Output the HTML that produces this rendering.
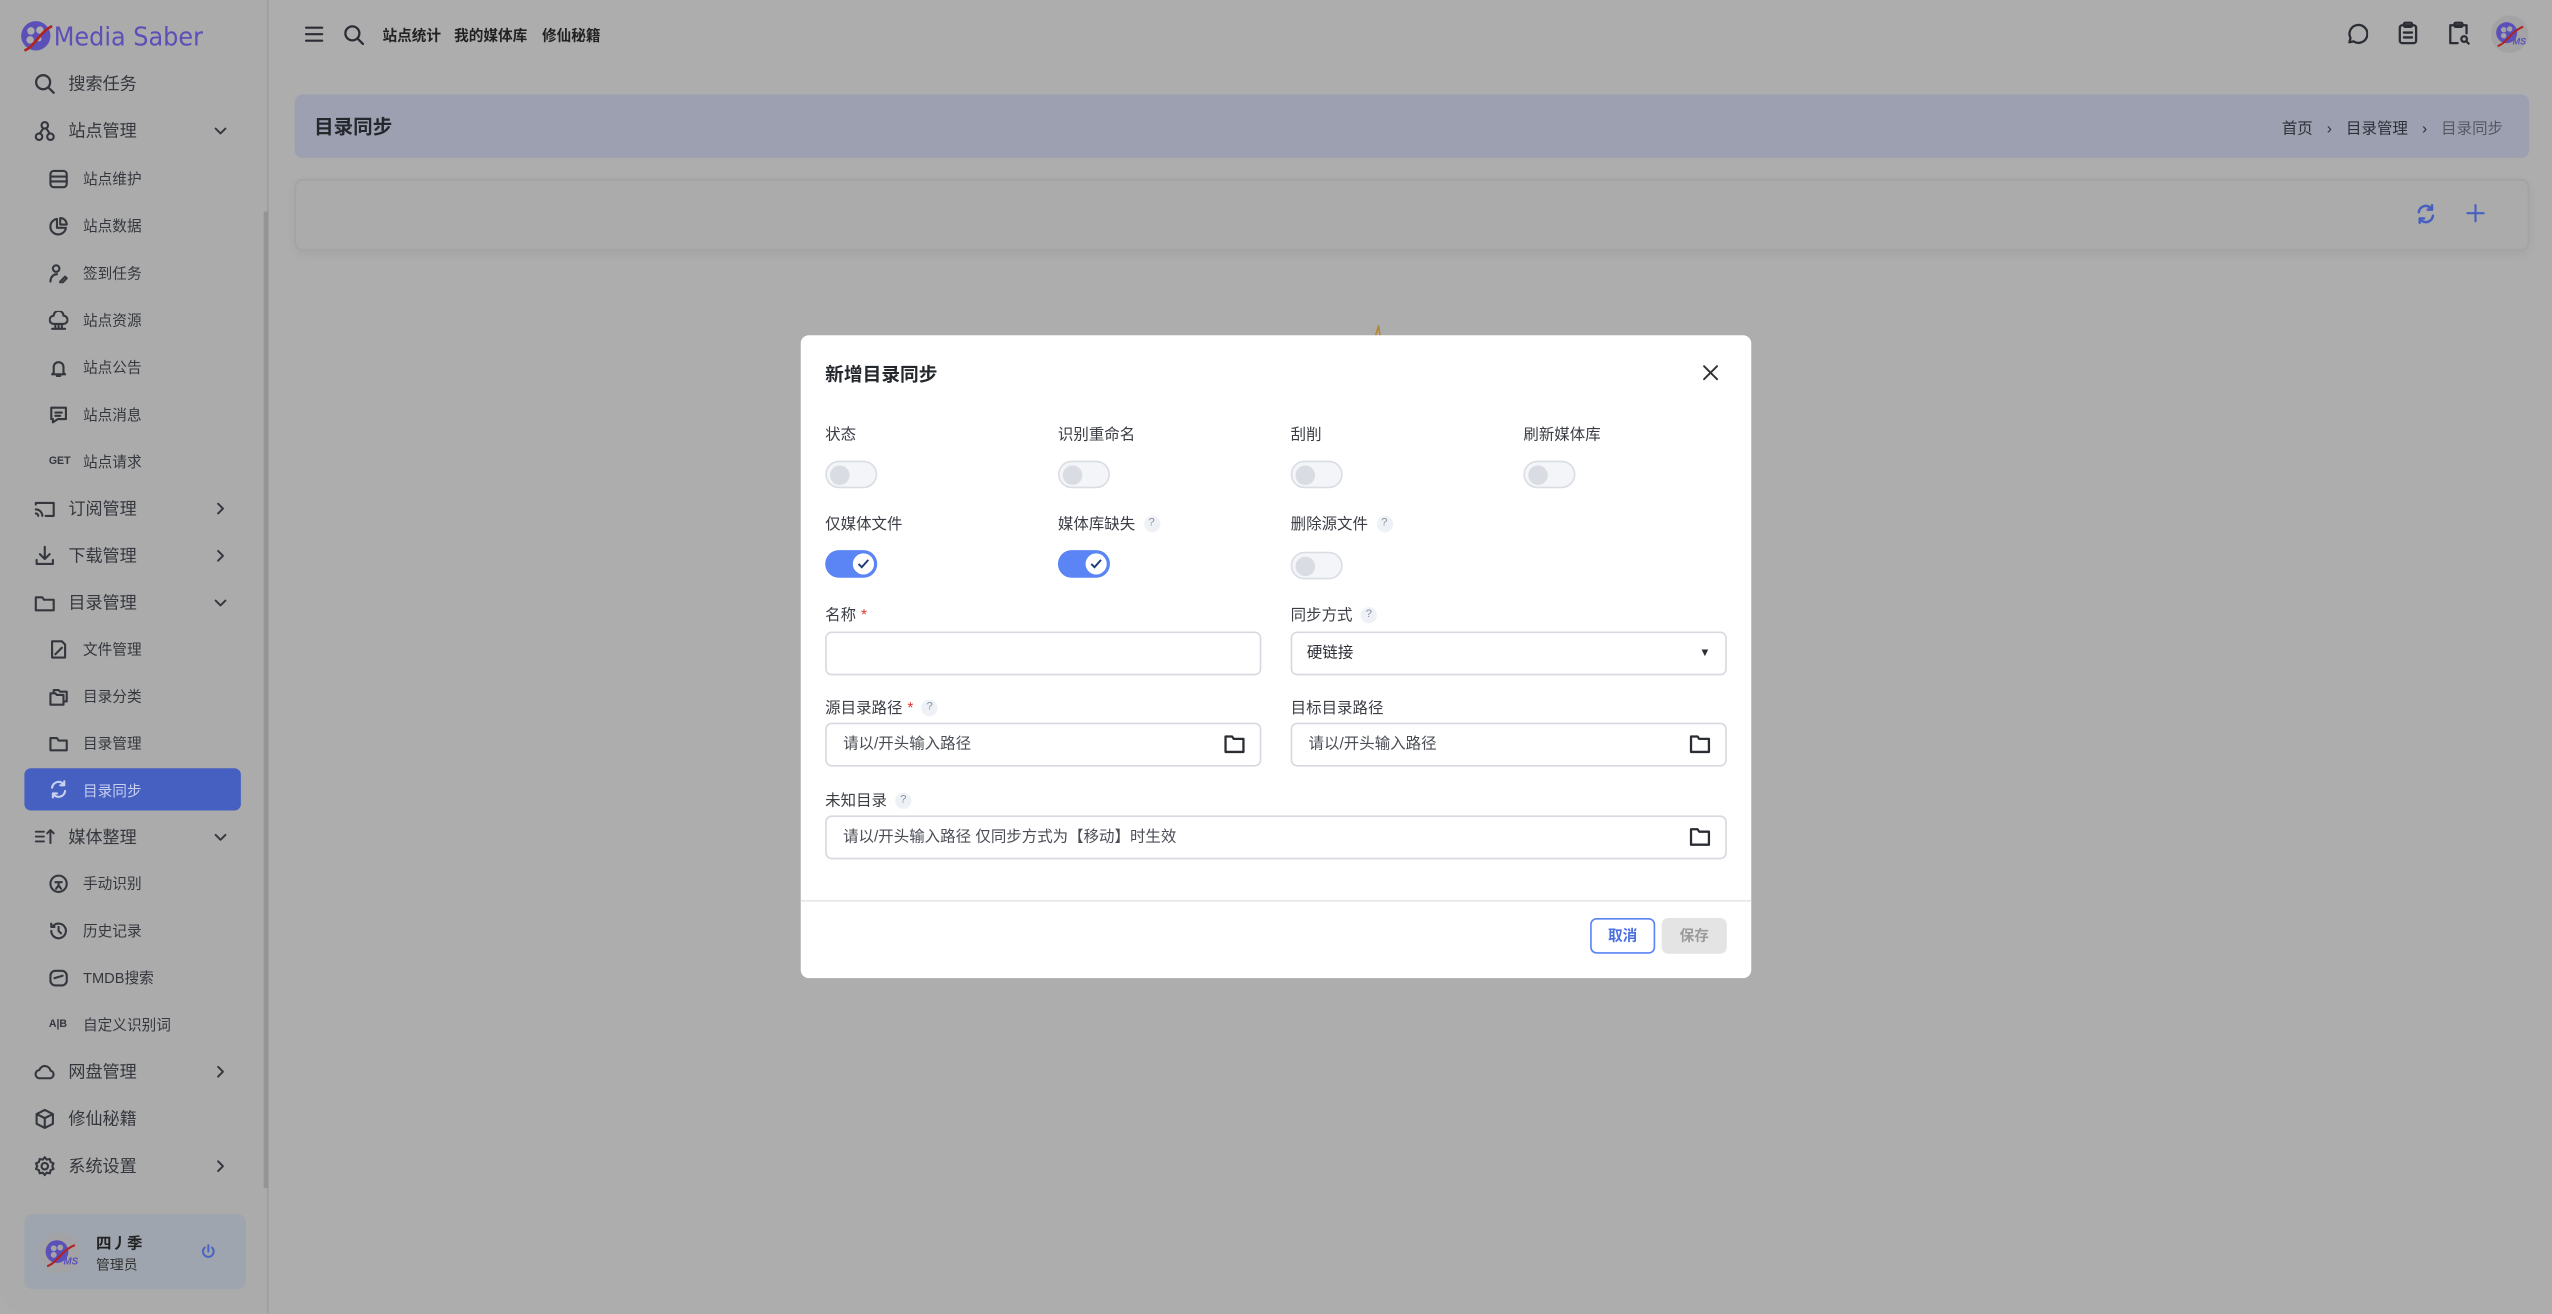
<!DOCTYPE html>
<html><head><meta charset="utf-8">
<style>
*{box-sizing:border-box;margin:0;padding:0}
html,body{width:2552px;height:1314px;overflow:hidden;background:#adadad}
body{font-family:"Liberation Sans","Noto Sans CJK SC",sans-serif;color:#2a2d33}
#w{position:absolute;left:0;top:0;width:1568px;height:807px;transform:scale(1.62755);transform-origin:0 0;background:#adadad}
.abs{position:absolute}
.side{left:0;top:0;width:165px;height:807px;background:#ababab;border-right:1px solid #9c9c9c;border-radius:0 0 0 14px}
.it{position:absolute;font-size:10.5px;color:#34373d;display:flex;align-items:center}
.sub{font-size:9px}
svg.i{fill:none;stroke-linecap:round;stroke-linejoin:round}
.dlg{left:492px;top:206px;width:584px;height:395px;background:#fff;border-radius:5px}
.lbl{position:absolute;font-size:9.5px;color:#3a3d44}
.q{display:inline-block;width:10px;height:10px;border-radius:5px;background:#eef1f5;color:#8a93a0;font-size:7px;text-align:center;line-height:10px;margin-left:5px;vertical-align:middle}
.tg{position:absolute;width:32px;height:17px;border-radius:9px;background:#f3f5f8;border:1.3px solid #dadde3}
.tg::after{content:"";position:absolute;left:2px;top:1.5px;width:12px;height:12px;border-radius:6px;background:#d9dce2}
.on{position:absolute;width:32px;height:17px;border-radius:9px;background:#5b84f4}
.on span{position:absolute;right:2px;top:2px;width:13px;height:13px;border-radius:7px;background:#fff}
.inp{position:absolute;height:27px;border:1px solid #d6d9df;border-radius:4px;font-size:9.5px;color:#4a4d55;padding-left:10px;line-height:25px}
.inp svg{position:absolute;right:9px;top:6px;fill:none;stroke:#2a2d33;stroke-width:1.4;stroke-linejoin:round}
.req{color:#e53935;margin-left:3px}
</style></head><body><div id="w">

<div class="abs side">
  <svg class="abs" style="left:12px;top:12px" width="22" height="22" viewBox="0 0 22 22"><circle cx="10" cy="10" r="9" fill="#5b4fb8"/><circle cx="7" cy="7" r="2.3" fill="#ababab"/><circle cx="12.5" cy="6.5" r="2.3" fill="#ababab"/><circle cx="6.5" cy="12.5" r="2.3" fill="#ababab"/><circle cx="12" cy="12" r="1.5" fill="#ababab"/><path d="M3 19 C9 17 12 8 20 4" stroke="#b12323" stroke-width="1.6" fill="none"/></svg>
  <div class="abs" style="left:33px;top:13px;font-size:16px;color:#5b4fb8;font-family:'DejaVu Sans',sans-serif;transform:scaleX(0.92);transform-origin:0 0">Media Saber</div>

  <div class="it" style="left:42px;top:44px">搜索任务</div>
  <svg class="abs i" style="left:21px;top:45px" width="13" height="13" viewBox="0 0 13 13" stroke="#34373d" stroke-width="1.4"><circle cx="5.5" cy="5.5" r="4.3"/><path d="M9 9l3 3"/></svg>

  <div class="it" style="left:42px;top:73px">站点管理</div>
  <svg class="abs i" style="left:131px;top:77px" width="9" height="7" viewBox="0 0 9 7" stroke="#34373d" stroke-width="1.2"><path d="M1.5 2l3 3 3-3"/></svg>
  <svg class="abs i" style="left:21px;top:74px" width="13" height="13" viewBox="0 0 13 13" stroke="#34373d" stroke-width="1.3"><circle cx="6.5" cy="3" r="2"/><circle cx="3" cy="10" r="2"/><circle cx="10" cy="10" r="2"/><path d="M5.5 5L3.5 8M7.5 5l2 3"/></svg>

  <div class="it sub" style="left:51px;top:103px">站点维护</div>
  <svg class="abs i" style="left:30px;top:104px" width="12" height="12" viewBox="0 0 12 12" stroke="#34373d" stroke-width="1.3"><rect x="1" y="1" width="10" height="10" rx="2"/><path d="M1 4.5h10M1 7.5h10"/></svg>
  <div class="it sub" style="left:51px;top:132px">站点数据</div>
  <svg class="abs i" style="left:30px;top:133px" width="12" height="12" viewBox="0 0 12 12" stroke="#34373d" stroke-width="1.3"><path d="M5 1.5a4.8 4.8 0 1 0 5.5 5.5H5z"/><path d="M7 1v4h4A4 4 0 0 0 7 1z"/></svg>
  <div class="it sub" style="left:51px;top:161px">签到任务</div>
  <svg class="abs i" style="left:30px;top:162px" width="12" height="12" viewBox="0 0 12 12" stroke="#34373d" stroke-width="1.3"><circle cx="4.5" cy="3" r="2"/><path d="M1 11c0-3 2-4.5 4-4.5M7 11l3-3 1 1-3 3H7z"/></svg>
  <div class="it sub" style="left:51px;top:190px">站点资源</div>
  <svg class="abs i" style="left:30px;top:191px" width="12" height="12" viewBox="0 0 12 12" stroke="#34373d" stroke-width="1.3"><path d="M3 8a2.5 2.5 0 0 1 0-5 3 3 0 0 1 6 0 2.5 2.5 0 0 1 0 5zM4 8v3M6 8v3M8 8v3M2 11h8"/></svg>
  <div class="it sub" style="left:51px;top:219px">站点公告</div>
  <svg class="abs i" style="left:30px;top:220px" width="12" height="12" viewBox="0 0 12 12" stroke="#34373d" stroke-width="1.3"><path d="M3 9V5.5a3 3 0 0 1 6 0V9l1 1H2zM5 11h2"/></svg>
  <div class="it sub" style="left:51px;top:248px">站点消息</div>
  <svg class="abs i" style="left:30px;top:249px" width="12" height="12" viewBox="0 0 12 12" stroke="#34373d" stroke-width="1.3"><path d="M1.5 1.5h9v7h-5l-3 2v-2h-1z"/><path d="M4 4.5h4M4 6.5h3"/></svg>
  <div class="it sub" style="left:51px;top:277px">站点请求</div>
  <div class="abs" style="left:30px;top:280px;font-size:6.5px;font-weight:bold;color:#34373d">GET</div>

  <div class="it" style="left:42px;top:305px">订阅管理</div>
  <svg class="abs i" style="left:132px;top:308px" width="7" height="9" viewBox="0 0 7 9" stroke="#34373d" stroke-width="1.2"><path d="M2 1.5l3 3-3 3"/></svg>
  <svg class="abs i" style="left:21px;top:306px" width="13" height="13" viewBox="0 0 13 13" stroke="#34373d" stroke-width="1.3"><path d="M1 4V3h11v8H7M1 7a4 4 0 0 1 4 4M1 9.5a1.5 1.5 0 0 1 1.5 1.5"/></svg>
  <div class="it" style="left:42px;top:334px">下载管理</div>
  <svg class="abs i" style="left:132px;top:337px" width="7" height="9" viewBox="0 0 7 9" stroke="#34373d" stroke-width="1.2"><path d="M2 1.5l3 3-3 3"/></svg>
  <svg class="abs i" style="left:21px;top:335px" width="13" height="13" viewBox="0 0 13 13" stroke="#34373d" stroke-width="1.3"><path d="M6.5 1v7M3.5 5.5l3 3 3-3M1.5 9v2.5h10V9"/></svg>
  <div class="it" style="left:42px;top:363px">目录管理</div>
  <svg class="abs i" style="left:131px;top:367px" width="9" height="7" viewBox="0 0 9 7" stroke="#34373d" stroke-width="1.2"><path d="M1.5 2l3 3 3-3"/></svg>
  <svg class="abs i" style="left:21px;top:364px" width="13" height="13" viewBox="0 0 13 13" stroke="#34373d" stroke-width="1.3"><path d="M1 3h4l1 1.5h6V11H1z"/></svg>

  <div class="it sub" style="left:51px;top:392px">文件管理</div>
  <svg class="abs i" style="left:30px;top:393px" width="12" height="12" viewBox="0 0 12 12" stroke="#34373d" stroke-width="1.3"><path d="M2 1h6l2 2v8H2zM4 9l4-4"/></svg>
  <div class="it sub" style="left:51px;top:421px">目录分类</div>
  <svg class="abs i" style="left:30px;top:422px" width="12" height="12" viewBox="0 0 12 12" stroke="#34373d" stroke-width="1.3"><path d="M1 4h3l1 1h4v6H1zM3 4V2h3l1 1h4v6H9"/></svg>
  <div class="it sub" style="left:51px;top:450px">目录管理</div>
  <svg class="abs i" style="left:30px;top:451px" width="12" height="12" viewBox="0 0 12 12" stroke="#34373d" stroke-width="1.3"><path d="M1 2.5h4l1 1.5h5V10H1z"/></svg>

  <div class="abs" style="left:15px;top:472px;width:133px;height:26px;background:#4560c0;border-radius:4px"></div>
  <div class="it sub" style="left:51px;top:479px;color:#c7d0ee">目录同步</div>
  <svg class="abs i" style="left:30px;top:479px" width="12" height="12" viewBox="0 0 12 12" stroke="#c7d0ee" stroke-width="1.3"><path d="M2 5a4 4 0 0 1 7.5-1.5M10 7a4 4 0 0 1-7.5 1.5M9.5 1v2.5H7M2.5 11V8.5H5"/></svg>

  <div class="it" style="left:42px;top:507px">媒体整理</div>
  <svg class="abs i" style="left:131px;top:511px" width="9" height="7" viewBox="0 0 9 7" stroke="#34373d" stroke-width="1.2"><path d="M1.5 2l3 3 3-3"/></svg>
  <svg class="abs i" style="left:21px;top:508px" width="13" height="12" viewBox="0 0 13 12" stroke="#34373d" stroke-width="1.2"><path d="M1 3h5M1 6h5M1 9h5M10 10V2M8 4l2-2 2 2"/></svg>
  <div class="it sub" style="left:51px;top:536px">手动识别</div>
  <svg class="abs i" style="left:30px;top:537px" width="12" height="12" viewBox="0 0 12 12" stroke="#34373d" stroke-width="1.3"><circle cx="6" cy="6" r="5"/><path d="M4 5h4M6 5v2l-1.5 2M6 7l1.5 2"/></svg>
  <div class="it sub" style="left:51px;top:565px">历史记录</div>
  <svg class="abs i" style="left:30px;top:566px" width="12" height="12" viewBox="0 0 12 12" stroke="#34373d" stroke-width="1.3"><path d="M1.5 6a4.5 4.5 0 1 0 1.3-3.2M1.5 1.5v2h2M6 3.5V6l1.5 1.5"/></svg>
  <div class="it sub" style="left:51px;top:594px">TMDB搜索</div>
  <svg class="abs i" style="left:30px;top:595px" width="12" height="12" viewBox="0 0 12 12" stroke="#34373d" stroke-width="1.3"><rect x="1" y="1.5" width="10" height="9" rx="3"/><path d="M3.5 6l5-1.5"/></svg>
  <div class="it sub" style="left:51px;top:623px">自定义识别词</div>
  <div class="abs" style="left:30px;top:626px;font-size:6.5px;font-weight:bold;color:#34373d">A|B</div>

  <div class="it" style="left:42px;top:651px">网盘管理</div>
  <svg class="abs i" style="left:132px;top:654px" width="7" height="9" viewBox="0 0 7 9" stroke="#34373d" stroke-width="1.2"><path d="M2 1.5l3 3-3 3"/></svg>
  <svg class="abs i" style="left:21px;top:652px" width="13" height="13" viewBox="0 0 13 13" stroke="#34373d" stroke-width="1.3"><path d="M3.5 10.5a2.5 2.5 0 0 1-.3-5 3.5 3.5 0 0 1 6.8.3 2.4 2.4 0 0 1 0 4.7z"/></svg>
  <div class="it" style="left:42px;top:680px">修仙秘籍</div>
  <svg class="abs i" style="left:21px;top:681px" width="13" height="13" viewBox="0 0 13 13" stroke="#34373d" stroke-width="1.3"><path d="M6.5 1l5 2.5v6l-5 2.5-5-2.5v-6zM1.5 3.5l5 2.5 5-2.5M6.5 6v6"/></svg>
  <div class="it" style="left:42px;top:709px">系统设置</div>
  <svg class="abs i" style="left:132px;top:712px" width="7" height="9" viewBox="0 0 7 9" stroke="#34373d" stroke-width="1.2"><path d="M2 1.5l3 3-3 3"/></svg>
  <svg class="abs i" style="left:21px;top:710px" width="13" height="13" viewBox="0 0 13 13" stroke="#34373d" stroke-width="1.3"><circle cx="6.5" cy="6.5" r="2"/><path d="M6.5 1l1.2 1.5 1.9-.4.5 1.9 1.8.8-.8 1.7.8 1.7-1.8.8-.5 1.9-1.9-.4L6.5 12l-1.2-1.5-1.9.4-.5-1.9-1.8-.8.8-1.7-.8-1.7 1.8-.8.5-1.9 1.9.4z"/></svg>

  <div class="abs" style="left:162px;top:130px;width:3px;height:600px;background:#949494"></div>

  <div class="abs" style="left:15px;top:746px;width:136px;height:46px;background:#9ea5ae;border-radius:5px"></div>
  <svg class="abs" style="left:24px;top:757px" width="26" height="26" viewBox="0 0 26 26"><circle cx="13" cy="13" r="12.5" fill="#a3a3a6"/><circle cx="11" cy="12" r="7" fill="#5b4fb8"/><circle cx="9" cy="10" r="1.8" fill="#a3a3a6"/><circle cx="13" cy="9.5" r="1.8" fill="#a3a3a6"/><circle cx="9" cy="14" r="1.8" fill="#a3a3a6"/><path d="M5 21C11 19 14 11 22 8" stroke="#b12323" stroke-width="1.3" fill="none"/><text x="15" y="20" font-size="6" font-style="italic" font-weight="bold" fill="#5b4fb8" font-family="Liberation Sans">MS</text></svg>
  <div class="abs" style="left:59px;top:756px;font-size:9.5px;font-weight:bold;color:#222">四丿季</div>
  <div class="abs" style="left:59px;top:771px;font-size:8.5px;color:#333">管理员</div>
  <svg class="abs i" style="left:123px;top:764px" width="10" height="10" viewBox="0 0 10 10" stroke="#4a63c4" stroke-width="1.2"><path d="M5 1v4M2.8 2.5a3.3 3.3 0 1 0 4.4 0"/></svg>
</div>

<!-- top bar -->
<svg class="abs i" style="left:187px;top:16px" width="12" height="10" viewBox="0 0 12 10" stroke="#2a2d33" stroke-width="1.3"><path d="M1 1h10M1 5h10M1 9h10"/></svg>
<svg class="abs i" style="left:211px;top:15px" width="13" height="13" viewBox="0 0 13 13" stroke="#2a2d33" stroke-width="1.4"><circle cx="5.5" cy="5.5" r="4.3"/><path d="M9 9l3 3"/></svg>
<div class="abs" style="left:235px;top:15px;font-size:9px;font-weight:bold;color:#222">站点统计</div>
<div class="abs" style="left:279px;top:15px;font-size:9px;font-weight:bold;color:#222">我的媒体库</div>
<div class="abs" style="left:333px;top:15px;font-size:9px;font-weight:bold;color:#222">修仙秘籍</div>

<svg class="abs i" style="left:1441px;top:14px" width="14" height="14" viewBox="0 0 14 14" stroke="#2a2d33" stroke-width="1.4"><path d="M2.5 12l.7-2.6A5.5 5.5 0 1 1 5 11.4z"/></svg>
<svg class="abs i" style="left:1473px;top:13px" width="13" height="15" viewBox="0 0 13 15" stroke="#2a2d33" stroke-width="1.4"><rect x="1.5" y="2.5" width="10" height="11" rx="1.5"/><rect x="4" y="1" width="5" height="2.5" rx=".8"/><path d="M4 7h5M4 10h5"/></svg>
<svg class="abs i" style="left:1504px;top:13px" width="14" height="15" viewBox="0 0 14 15" stroke="#2a2d33" stroke-width="1.4"><path d="M6 13.5H1.5v-11h10v5"/><rect x="4" y="1" width="5" height="2.5" rx=".8"/><circle cx="10" cy="11" r="1.7"/><path d="M11.3 12.3l1.5 1.5"/></svg>
<svg class="abs" style="left:1530px;top:9px" width="24" height="24" viewBox="0 0 26 26"><circle cx="13" cy="13" r="12.5" fill="#a3a3a6"/><circle cx="11" cy="12" r="7" fill="#5b4fb8"/><circle cx="9" cy="10" r="1.8" fill="#a3a3a6"/><circle cx="13" cy="9.5" r="1.8" fill="#a3a3a6"/><circle cx="9" cy="14" r="1.8" fill="#a3a3a6"/><path d="M5 21C11 19 14 11 22 8" stroke="#b12323" stroke-width="1.3" fill="none"/><text x="15" y="20" font-size="6" font-style="italic" font-weight="bold" fill="#5b4fb8" font-family="Liberation Sans">MS</text></svg>

<!-- page header -->
<div class="abs" style="left:181px;top:58px;width:1373px;height:39px;background:#9ca0b1;border-radius:5px"></div>
<div class="abs" style="left:193px;top:69px;font-size:12px;font-weight:bold;color:#24272c">目录同步</div>
<div class="abs" style="left:1402px;top:71px;font-size:9.5px;color:#2d3036;white-space:nowrap">首页 <span style="margin:0 6px">›</span> 目录管理 <span style="margin:0 6px">›</span> <span style="color:#555a62">目录同步</span></div>
<div class="abs" style="left:181px;top:110px;width:1373px;height:44px;background:#ababab;border:1px solid #a3a3a3;border-radius:5px;box-shadow:0 2px 6px rgba(0,0,0,.05)"></div>
<svg class="abs i" style="left:1484px;top:125px" width="13" height="13" viewBox="0 0 12 12" stroke="#4560c0" stroke-width="1.4"><path d="M2 5a4 4 0 0 1 7.5-1.5M10 7a4 4 0 0 1-7.5 1.5M9.5 1v2.5H7M2.5 11V8.5H5"/></svg>
<svg class="abs i" style="left:1515px;top:125px" width="12" height="12" viewBox="0 0 12 12" stroke="#4560c0" stroke-width="1.3"><path d="M6 1v10M1 6h10"/></svg>
<svg class="abs" style="left:844px;top:199px" width="6" height="8" viewBox="0 0 6 8"><path d="M1 8L3 1l1 7" stroke="#b7852d" fill="none" stroke-width="1"/></svg>

<!-- dialog -->
<div class="abs dlg">
  <div class="abs" style="left:15px;top:16px;font-size:11.5px;font-weight:bold;color:#24272c">新增目录同步</div>
  <svg class="abs i" style="left:554px;top:18px" width="10" height="10" viewBox="0 0 10 10" stroke="#333" stroke-width="1.2"><path d="M1 1l8 8M9 1l-8 8"/></svg>

  <div class="lbl" style="left:15px;top:53px">状态</div>
  <div class="lbl" style="left:158px;top:53px">识别重命名</div>
  <div class="lbl" style="left:301px;top:53px">刮削</div>
  <div class="lbl" style="left:444px;top:53px">刷新媒体库</div>
  <div class="tg" style="left:15px;top:77px"></div>
  <div class="tg" style="left:158px;top:77px"></div>
  <div class="tg" style="left:301px;top:77px"></div>
  <div class="tg" style="left:444px;top:77px"></div>

  <div class="lbl" style="left:15px;top:108px">仅媒体文件</div>
  <div class="lbl" style="left:158px;top:108px">媒体库缺失<span class="q">?</span></div>
  <div class="lbl" style="left:301px;top:108px">删除源文件<span class="q">?</span></div>
  <div class="on" style="left:15px;top:132px"><span><svg width="13" height="13" viewBox="0 0 13 13"><path d="M3.5 6.5l2 2 4-4.5" stroke="#1f3c7a" stroke-width="1.2" fill="none"/></svg></span></div>
  <div class="on" style="left:158px;top:132px"><span><svg width="13" height="13" viewBox="0 0 13 13"><path d="M3.5 6.5l2 2 4-4.5" stroke="#1f3c7a" stroke-width="1.2" fill="none"/></svg></span></div>
  <div class="tg" style="left:301px;top:133px"></div>

  <div class="lbl" style="left:15px;top:164px">名称<span class="req">*</span></div>
  <div class="lbl" style="left:301px;top:164px">同步方式<span class="q">?</span></div>
  <div class="inp" style="left:15px;top:182px;width:268px"></div>
  <div class="inp" style="left:301px;top:182px;width:268px;color:#2a2d33;padding-left:9px;line-height:26px">硬链接<span style="position:absolute;right:9px;top:0;font-size:7px">▼</span></div>

  <div class="lbl" style="left:15px;top:221px">源目录路径<span class="req">*</span><span class="q">?</span></div>
  <div class="lbl" style="left:301px;top:221px">目标目录路径</div>
  <div class="inp" style="left:15px;top:238px;width:268px;line-height:26px">请以/开头输入路径<svg width="13" height="12" viewBox="0 0 13 12"><path d="M1 1.5h4l1 1.5h6v8H1z"/></svg></div>
  <div class="inp" style="left:301px;top:238px;width:268px;line-height:26px">请以/开头输入路径<svg width="13" height="12" viewBox="0 0 13 12"><path d="M1 1.5h4l1 1.5h6v8H1z"/></svg></div>

  <div class="lbl" style="left:15px;top:278px">未知目录<span class="q">?</span></div>
  <div class="inp" style="left:15px;top:295px;width:554px;line-height:26px">请以/开头输入路径 仅同步方式为【移动】时生效<svg width="13" height="12" viewBox="0 0 13 12"><path d="M1 1.5h4l1 1.5h6v8H1z"/></svg></div>

  <div class="abs" style="left:0;top:347px;width:584px;height:1px;background:#e3e5e9"></div>
  <div class="abs" style="left:485px;top:358px;width:40px;height:22px;border:1px solid #5b84f4;border-radius:4px;color:#4a6fe0;font-size:9px;font-weight:bold;text-align:center;line-height:20px">取消</div>
  <div class="abs" style="left:529px;top:358px;width:40px;height:22px;background:#e4e4e4;border-radius:4px;color:#9a9a9a;font-size:9px;font-weight:bold;text-align:center;line-height:22px">保存</div>
</div>

</div></body></html>
